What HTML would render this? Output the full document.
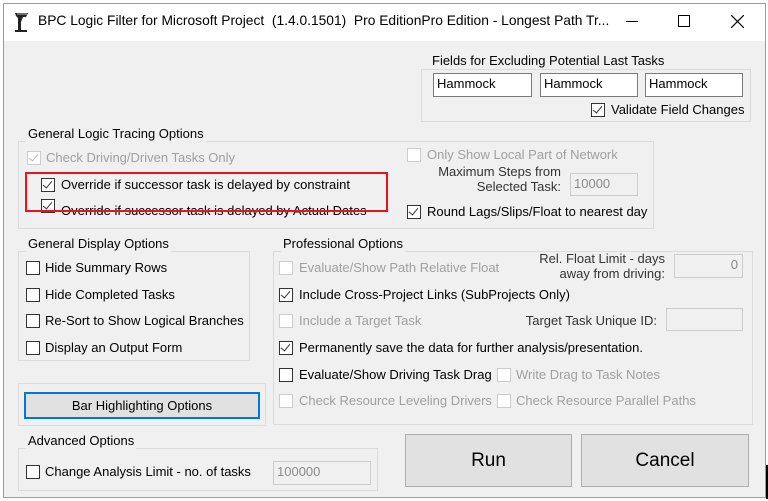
<!DOCTYPE html>
<html><head><meta charset="utf-8"><style>
*{margin:0;padding:0;box-sizing:border-box}
body{width:768px;height:501px;background:#fff;position:relative;overflow:hidden;font-family:"Liberation Sans",Arial,sans-serif;font-size:13px;color:#000}
.a{position:absolute}
.win{left:3px;top:3px;width:763px;height:495px;border:1px solid #e08a4a;background:#f0f0f0}
.title{left:4px;top:4px;width:761px;height:37px;background:#fff}
.t{position:absolute;line-height:16px;white-space:nowrap}
.g{color:#a0a0a0}
.grp{position:absolute;border:1px solid #dcdcdc}
.lg{position:absolute;background:#f0f0f0;padding:0 2px;line-height:16px;white-space:nowrap}
.cb{position:absolute;width:14px;height:14px;border:1px solid #333;background:#fff}
.cb.d{border-color:#ccc}
.cb.c::after{content:"";position:absolute;left:3px;top:0px;width:4px;height:8px;border:solid #333;border-width:0 1.5px 1.5px 0;transform:rotate(40deg)}
.cb.d.c::after{border-color:#bbb}
.tb{position:absolute;background:#fff;border:1px solid #7a7a7a;line-height:20px;padding-left:3px}
.tb.d{background:#f0f0f0;border-color:#ccc;color:#8a8a8a}
.btn{position:absolute;background:#e1e1e1;border:1px solid #adadad;text-align:center}
</style></head><body>
<div class="a win"></div>
<div class="a title"></div>
<svg class="a" style="left:12px;top:11px" width="20" height="22" viewBox="0 0 20 22"><path d="M3 2h13l-2 4h-3l-2 5v8h6v2H3v-2h3V7L4 5z" fill="#222"/><path d="M5 3h10" stroke="#888" stroke-width="1.5"/></svg>
<div class="t" style="left:38px;top:13px;font-size:13.8px">BPC Logic Filter for Microsoft Project&nbsp; (1.4.0.1501)&nbsp; Pro EditionPro Edition - Longest Path Tr...</div>
<div class="a" style="left:626px;top:21px;width:12px;height:1px;background:#000"></div>
<div class="a" style="left:678px;top:15px;width:12px;height:12px;border:1px solid #000"></div>
<svg class="a" style="left:731px;top:15px" width="13" height="13"><path d="M0 0L13 13M13 0L0 13" stroke="#000" stroke-width="1.2"/></svg>

<div class="grp" style="left:421px;top:69px;width:330px;height:53px"></div>
<div class="lg" style="left:430px;top:53px">Fields for Excluding Potential Last Tasks</div>
<div class="tb" style="left:433px;top:73px;width:99px;height:24px">Hammock</div>
<div class="tb" style="left:540px;top:73px;width:98px;height:24px">Hammock</div>
<div class="tb" style="left:645px;top:73px;width:98px;height:24px">Hammock</div>
<div class="cb c" style="left:591px;top:103px"></div>
<div class="t" style="left:611px;top:102px">Validate Field Changes</div>

<div class="grp" style="left:18px;top:141px;width:636px;height:88px"></div>
<div class="lg" style="left:26px;top:126px">General Logic Tracing Options</div>
<div class="cb d c" style="left:27px;top:151px"></div>
<div class="t g" style="left:46px;top:150px">Check Driving/Driven Tasks Only</div>
<div class="cb c" style="left:41px;top:178px"></div>
<div class="t" style="left:61px;top:177px">Override if successor task is delayed by constraint</div>
<div class="cb c" style="left:41px;top:199px"></div>
<div class="t" style="left:61px;top:203px">Override if successor task is delayed by Actual Dates</div>
<div class="a" style="left:25px;top:172px;width:363px;height:40px;border:2.5px solid #e8141c"></div>
<div class="cb d" style="left:407px;top:148px"></div>
<div class="t g" style="left:427px;top:147px">Only Show Local Part of Network</div>
<div class="t" style="left:400px;top:164px;width:161px;text-align:right;line-height:15px;color:#333">Maximum Steps from<br>Selected Task:</div>
<div class="tb d" style="left:570px;top:173px;width:68px;height:23px">10000</div>
<div class="cb c" style="left:407px;top:205px"></div>
<div class="t" style="left:427px;top:204px">Round Lags/Slips/Float to nearest day</div>

<div class="grp" style="left:18px;top:251px;width:232px;height:110px"></div>
<div class="lg" style="left:26px;top:236px">General Display Options</div>
<div class="cb" style="left:26px;top:261px"></div><div class="t" style="left:45px;top:260px">Hide Summary Rows</div>
<div class="cb" style="left:26px;top:288px"></div><div class="t" style="left:45px;top:287px">Hide Completed Tasks</div>
<div class="cb" style="left:26px;top:314px"></div><div class="t" style="left:45px;top:313px">Re-Sort to Show Logical Branches</div>
<div class="cb" style="left:26px;top:341px"></div><div class="t" style="left:45px;top:340px">Display an Output Form</div>

<div class="grp" style="left:18px;top:383px;width:248px;height:43px"></div>
<div class="btn" style="left:24px;top:392px;width:236px;height:27px;border:2px solid #0078d7;line-height:23px">Bar Highlighting Options</div>

<div class="grp" style="left:273px;top:251px;width:480px;height:174px"></div>
<div class="lg" style="left:281px;top:236px">Professional Options</div>
<div class="cb d" style="left:279px;top:261px"></div><div class="t g" style="left:299px;top:260px">Evaluate/Show Path Relative Float</div>
<div class="t" style="left:500px;top:251px;width:165px;text-align:right;line-height:15px;color:#333">Rel. Float Limit - days<br>away from driving:</div>
<div class="tb d" style="left:674px;top:254px;width:69px;height:24px;text-align:right;padding-right:4px">0</div>
<div class="cb c" style="left:279px;top:288px"></div><div class="t" style="left:299px;top:287px">Include Cross-Project Links (SubProjects Only)</div>
<div class="cb d" style="left:279px;top:314px"></div><div class="t g" style="left:299px;top:313px">Include a Target Task</div>
<div class="t" style="left:500px;top:313px;width:157px;text-align:right;color:#333">Target Task Unique ID:</div>
<div class="tb d" style="left:666px;top:308px;width:77px;height:23px"></div>
<div class="cb c" style="left:279px;top:341px"></div><div class="t" style="left:299px;top:340px">Permanently save the data for further analysis/presentation.</div>
<div class="cb" style="left:279px;top:368px"></div><div class="t" style="left:299px;top:367px">Evaluate/Show Driving Task Drag</div>
<div class="cb d" style="left:497px;top:368px"></div><div class="t g" style="left:516px;top:367px">Write Drag to Task Notes</div>
<div class="cb d" style="left:279px;top:394px"></div><div class="t g" style="left:299px;top:393px">Check Resource Leveling Drivers</div>
<div class="cb d" style="left:497px;top:394px"></div><div class="t g" style="left:516px;top:393px">Check Resource Parallel Paths</div>

<div class="grp" style="left:18px;top:448px;width:360px;height:43px"></div>
<div class="lg" style="left:26px;top:433px">Advanced Options</div>
<div class="cb" style="left:26px;top:465px"></div><div class="t" style="left:45px;top:464px">Change Analysis Limit - no. of tasks</div>
<div class="tb d" style="left:273px;top:461px;width:98px;height:24px">100000</div>

<div class="btn" style="left:405px;top:434px;width:167px;height:53px;line-height:51px;font-size:19px">Run</div>
<div class="btn" style="left:581px;top:434px;width:168px;height:53px;line-height:51px;font-size:19px">Cancel</div>
<div class="a" style="left:766px;top:465px;width:2px;height:34px;background:#000"></div>
</body></html>
